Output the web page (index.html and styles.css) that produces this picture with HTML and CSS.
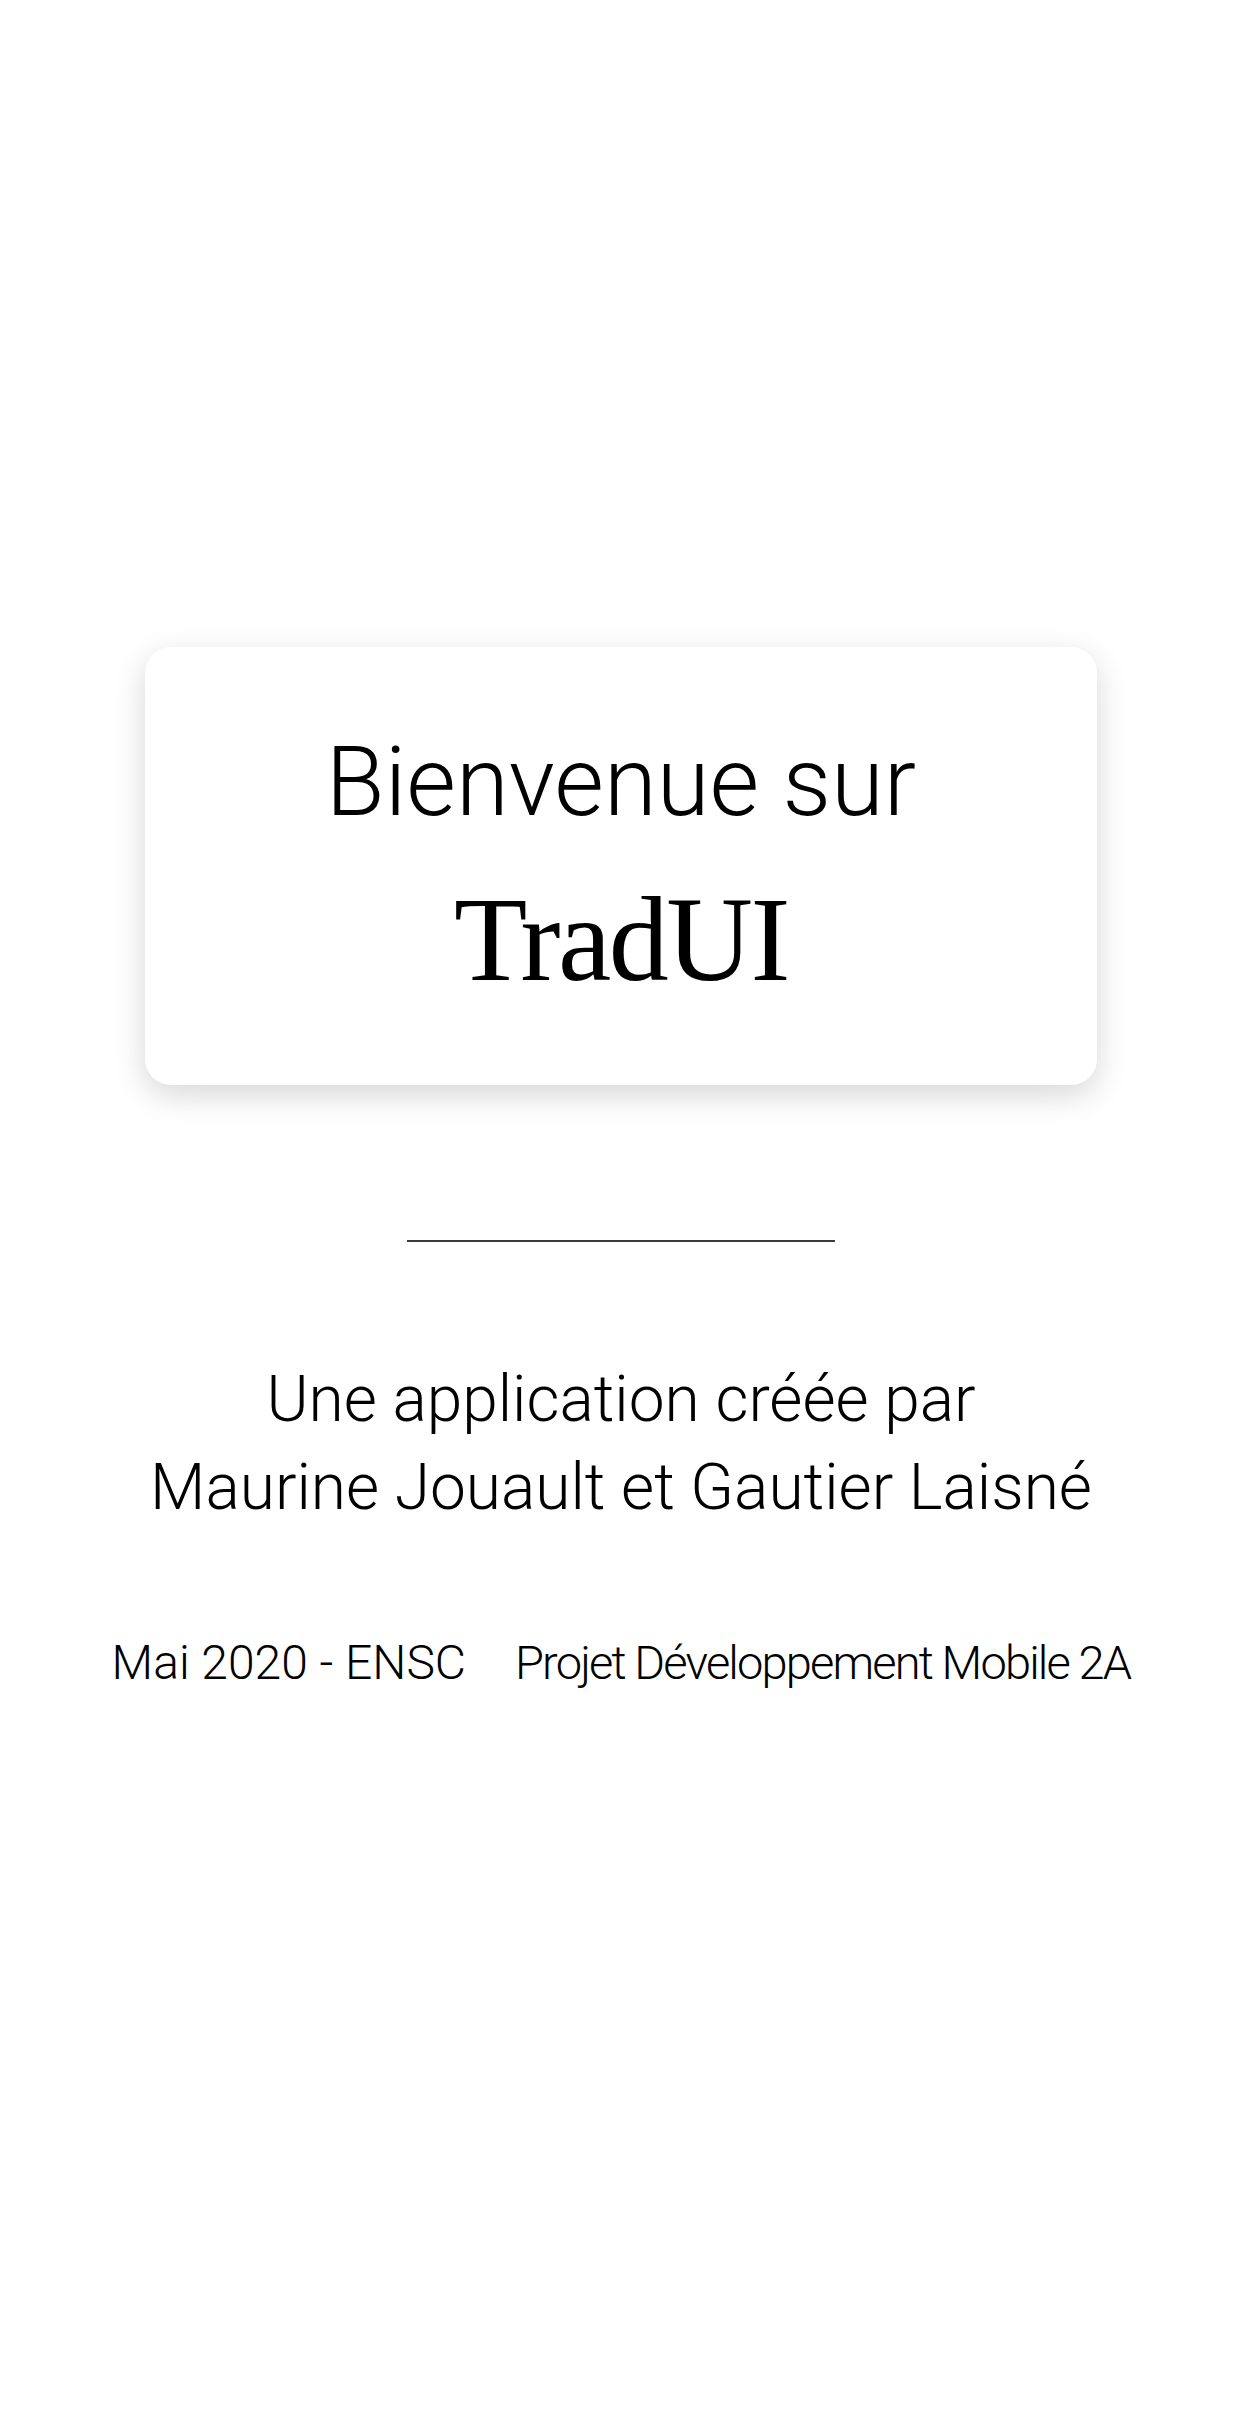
FILE: index.html
```html
<!DOCTYPE html>
<html lang="fr">
<head>
<meta charset="utf-8">
<title>TradUI</title>
<link rel="stylesheet" href="styles.css">
</head>
<body>
<main class="screen">
  <section class="card">
    <h1 class="welcome">Bienvenue sur</h1>
    <h2 class="brand">TradUI</h2>
  </section>
  <hr class="divider">
  <p class="credits">Une application créée par<br>Maurine Jouault et Gautier Laisné</p>
  <footer class="footer">
    <span class="date">Mai 2020 - ENSC</span>
    <span class="project">Projet Développement Mobile 2A</span>
  </footer>
</main>
</body>
</html>
```

FILE: styles.css
```css
html, body {
  margin: 0;
  padding: 0;
  background: #ffffff;
}

body {
  width: 1242px;
  height: 2436px;
  overflow: hidden;
  color: #000000;
  font-family: Roboto, "Liberation Sans", sans-serif;
  font-weight: 300;
}

.screen {
  display: flex;
  flex-direction: column;
  align-items: center;
  padding-top: 647px;
}

.card {
  box-sizing: border-box;
  width: 952px;
  height: 438px;
  background: #ffffff;
  border-radius: 26px;
  box-shadow: 0 10px 32px rgba(0, 0, 0, 0.16);
  display: flex;
  flex-direction: column;
  align-items: center;
  padding-top: 78px;
}

.welcome {
  margin: 0;
  font-family: Roboto, "Liberation Sans", sans-serif;
  font-weight: 300;
  font-size: 96px;
  line-height: 115px;
}

.brand {
  margin: 28px 0 0 0;
  font-family: "Liberation Serif", "DejaVu Serif", serif;
  font-weight: 400;
  font-size: 120px;
  line-height: 144px;
  letter-spacing: -2.5px;
}

.divider {
  width: 428px;
  height: 0;
  border: 0;
  border-top: 2px solid #3a3a3a;
  margin: 155px 0 0 0;
}

.credits {
  margin: 114px 0 0 0;
  text-align: center;
  font-size: 64px;
  line-height: 88px;
  font-weight: 300;
}

.footer {
  margin-top: 102px;
  display: flex;
  gap: 49px;
  align-items: baseline;
  font-size: 48px;
  line-height: 58px;
  font-weight: 300;
}

.project {
  font-size: 47px;
  letter-spacing: -1.85px;
}
```
